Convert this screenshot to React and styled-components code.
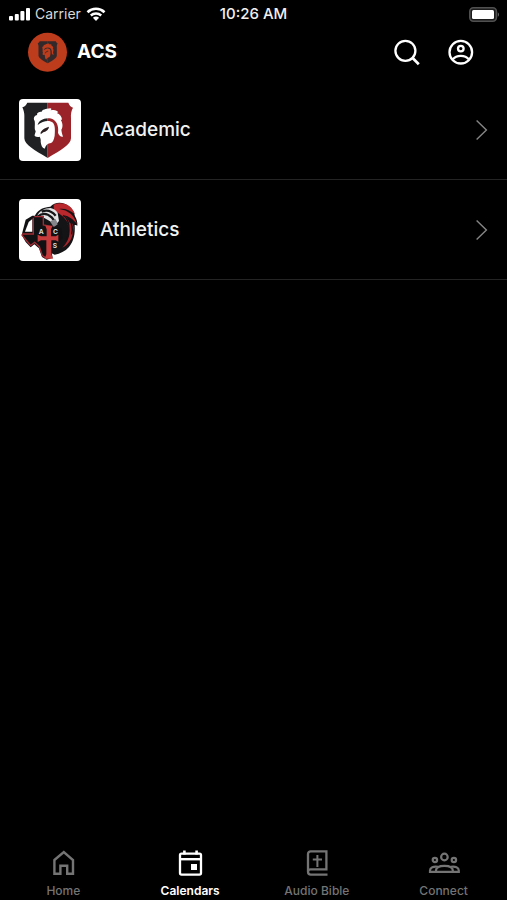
import { useState } from "react";
import styled, { createGlobalStyle } from "styled-components";

const GlobalStyle = createGlobalStyle`
  *,
  *::before,
  *::after {
    box-sizing: border-box;
  }

  body {
    margin: 0;
    background: #000;
    color: #fff;
    font-family: Inter, "Liberation Sans", sans-serif;
  }
`;

const Screen = styled.div`
  display: flex;
  flex-direction: column;
  min-height: 100vh;
`;

const StatusBar = styled.div`
  display: grid;
  grid-template-columns: 1fr auto 1fr;
  align-items: center;
  height: 28px;
  padding: 0 7px;
  font-size: 14px;
  line-height: 20px;
`;

const StatusGroup = styled.div`
  display: flex;
  align-items: center;
  gap: 5px;
  justify-content: ${(props) => (props.$end ? "flex-end" : "flex-start")};
  color: #d8d8d8;
`;

const Time = styled.time`
  font-size: 15px;
  font-weight: 500;
  color: #f0f0f0;
`;

const Header = styled.header`
  display: flex;
  align-items: center;
  height: 48px;
  padding: 0 32px 0 28px;
`;

const Title = styled.h1`
  flex: 1;
  margin: 0 0 0 10px;
  font-size: 19px;
  line-height: 24px;
  font-weight: 700;
`;

const Actions = styled.div`
  display: flex;
  gap: 26px;
`;

const IconButton = styled.button`
  display: flex;
  padding: 0;
  border: 0;
  background: none;
  color: #fff;
  cursor: pointer;
`;

const List = styled.ul`
  flex: 1;
  margin: 0;
  padding: 4px 0 0;
  list-style: none;
`;

const Row = styled.li`
  border-bottom: 1px solid #242424;
`;

const RowLink = styled.a`
  display: flex;
  align-items: center;
  gap: 19px;
  height: 99px;
  padding: 0 19px;
  color: #f2f2f2;
  text-decoration: none;
`;

const Thumb = styled.span`
  display: flex;
  overflow: hidden;
  border-radius: 4px;
  background: #fff;
`;

const RowLabel = styled.span`
  flex: 1;
  font-size: 19px;
  line-height: 24px;
  font-weight: 500;
`;

const TabBar = styled.nav`
  display: grid;
  grid-template-columns: repeat(4, 1fr);
`;

const Tab = styled.a`
  display: flex;
  flex-direction: column;
  align-items: center;
  gap: 6px;
  padding-bottom: 1px;
  font-size: 12px;
  line-height: 16px;
  font-weight: ${(props) => (props.$active ? 600 : 500)};
  color: ${(props) => (props.$active ? "#fff" : "#747474")};
  text-decoration: none;
`;

// --- status icons ------------------------------------------------
function SignalIcon() {
  return (
    <svg width="23" height="14" viewBox="-2 0 23 14" fill="#fff" aria-hidden="true">
      <rect x="0" y="9" width="4" height="4.5" rx="1" />
      <rect x="5.8" y="7" width="4" height="6.5" rx="1" />
      <rect x="11.4" y="4" width="4" height="9.5" rx="1" />
      <rect x="17" y="1" width="4" height="12.5" rx="1" />
    </svg>
  );
}

function WifiIcon() {
  return (
    <svg width="20" height="14" viewBox="0 0 20 14" fill="none" aria-hidden="true">
      <path d="M1.5 5.2a12.3 12.3 0 0 1 17 0" stroke="#fff" strokeWidth="2.6" />
      <path d="M4.8 8.5a7.6 7.6 0 0 1 10.4 0" stroke="#fff" strokeWidth="2.4" />
      <path d="M10 14 6.9 10.8a4.6 4.6 0 0 1 6.2 0z" fill="#fff" />
    </svg>
  );
}

function BatteryIcon() {
  return (
    <svg width="31" height="15" viewBox="0 0 31 15" aria-hidden="true">
      <rect x="0.8" y="0.8" width="26.6" height="13.4" rx="3.6" fill="#1c1c1c" stroke="#505050" strokeWidth="1.6" />
      <rect x="3" y="3" width="22" height="9" rx="1.5" fill="#fff" />
      <path d="M28.8 5.2c1.6.8 1.6 3.8 0 4.6z" fill="#666" />
    </svg>
  );
}

// --- header icons ------------------------------------------------
function SearchIcon() {
  return (
    <svg width="28" height="28" viewBox="0 0 28 28" fill="none" stroke="#fff" strokeWidth="2.3" aria-hidden="true">
      <circle cx="12.4" cy="12.8" r="10" />
      <path d="m19.6 20 6.2 6.2" strokeWidth="2.7" />
    </svg>
  );
}

function ProfileIcon() {
  return (
    <svg width="28" height="28" viewBox="0 0 28 28" fill="none" stroke="#fff" strokeWidth="2.3" aria-hidden="true">
      <circle cx="13.8" cy="14.2" r="11.3" />
      <circle cx="13.8" cy="10.6" r="2.8" />
      <path d="M5.8 21.4c3.6-4.6 12.4-4.6 16 0" />
    </svg>
  );
}

function ChevronIcon() {
  return (
    <svg width="12" height="20" viewBox="0 0 12 20" fill="none" stroke="#858585" strokeWidth="1.4" aria-hidden="true">
      <path d="m.6.6 9.8 9.4L.6 19.4" />
    </svg>
  );
}

// --- emblems -----------------------------------------------------
const SHIELD_LEFT =
  "M86 11H25C22 18 17 23 10 25c4 9 7 17 6 33v60c1 20 30 35 70 59z";
const SHIELD_RIGHT =
  "M86 11h62c3 8 7 12 14 15-5 9-7 18-6 32v60c-1 20-30 35-70 59z";
const HELMET =
  "M47 66C42 58 45 50 55 48C51 43 60 38 68 38C70 32 79 30 94 28C98 28 98 31 95 34C106 31 115 34 118 40L113 42C123 45 129 54 129 62L125 62C133 74 131 86 127 92C128 102 131 108 132 113C124 114 119 107 117 101C119 86 116 71 104 62C92 55 76 57 66 64C60 68 57 73 56 78C72 65 92 63 102 71C109 80 108 95 107 110C105 122 101 130 96 132C86 133 81 138 77 149C69 146 66 138 65 128C66 122 64 116 62 113C56 115 51 113 47 111C46 106 50 101 50 96C45 91 49 78 47 66Z";

function AppLogo() {
  return (
    <svg width="39" height="40" viewBox="0 0 39 40" aria-hidden="true">
      <circle cx="19.5" cy="20.3" r="19.5" fill="#bd3c1c" />
      <g transform="translate(8.4 7.8) scale(.131 .133)">
        <path d={SHIELD_LEFT} fill="#34292a" />
        <path d={SHIELD_RIGHT} fill="#34292a" />
        <path d={HELMET} fill="#bd3c1c" />
        <path d="M66 102c5-10 14-15 24-18" fill="none" stroke="#5b2c22" strokeWidth="8" />
      </g>
    </svg>
  );
}

function AcademicEmblem() {
  return (
    <svg width="62" height="62" viewBox="0 0 186 186" aria-hidden="true">
      <path d={SHIELD_LEFT} fill="#202123" />
      <path d={SHIELD_RIGHT} fill="#992328" />
      <path d={HELMET} fill="#fff" />
      <path d="M65 100c6-10 13-13 25-17-1 9-7 14-17 17l-8 6z" fill="#2a1c1f" />
    </svg>
  );
}

function AthleticsEmblem() {
  return (
    <svg width="62" height="62" viewBox="0 0 186 186" aria-hidden="true">
      {/* mane and plume */}
      <path
        d="M50 46c8-15 26-22 44-23 10-12 28-15 43-9 17 7 28 21 31 38 5 9 8 18 7 28-4-2-6-2-8-2 2 27-3 49-17 66-12 13-26 20-43 23L53 141 35 80z"
        fill="#141316"
      />
      <path d="M104 17c26-10 54-1 64 29-15-12-29-18-47-16 26 4 44 17 53 46-12-16-24-24-39-27 13 11 20 24 20 37-14-26-27-42-51-50z" fill="#b8282d" />
      <path d="M146 76c12 27 3 51-16 70 19-8 31-27 33-52 3-10 0-17-7-24z" fill="#a62329" />
      <path d="M132 49c19 10 24 43 9 75M150 60c10 14 12 30 8 46" fill="none" stroke="#141216" strokeWidth="4" />
      {/* helmet */}
      <path d="M52 54c9-18 24-27 43-27 9 2 17 7 21 15l4 24-13 14-15-14-20-11-20 4z" fill="#e3e3e5" />
      <path d="M56 53c14-12 29-10 42 2l12 16M68 38c16-7 31-1 42 12" fill="none" stroke="#17171a" strokeWidth="7" />
      <path d="M93 67l17-7 6 16-12 9z" fill="#85868b" />
      {/* state outline */}
      <path
        d="M40 50h34v26l19 5 34 6 4 31-18 17-16 20 4 21-18 6-14-8-9-26-14-12-11 9-15-16L8 108l12-46z"
        fill="#111114"
      />
      <path
        d="M8 107l13 16 14 16 12-9 14 13 9 27 13 8"
        fill="none"
        stroke="#a32b33"
        strokeWidth="4"
      />
      <path d="M18 98 29 69l11-9v38z" fill="#fff" />
      <path d="M43 56v49H9M46 53h27v25l22 4" fill="none" stroke="#a32b33" strokeWidth="4" />
      {/* cross */}
      <path d="M79 80h22l-5 11v21h14l8-5v21l-8-4H97v42l5 13H77l5-13v-42H66l-10 5v-22l10 5h17V91z" fill="#c83b3c" />
      <g fill="#ddd" fontFamily="Inter, sans-serif" fontSize="20" fontWeight="700">
        <text x="59" y="106">A</text>
        <text x="102" y="106">C</text>
        <text x="101" y="148">S</text>
      </g>
    </svg>
  );
}

// --- tab icons ---------------------------------------------------
function HomeIcon() {
  return (
    <svg width="28" height="28" viewBox="0 0 28 28" fill="none" stroke="currentColor" strokeWidth="2.4" aria-hidden="true">
      <path d="M5.4 11 14.8 3l9.2 8v13.8h-5.8v-8h-6.8v8h-6z" />
    </svg>
  );
}

function CalendarIcon() {
  return (
    <svg width="28" height="28" viewBox="0 0 28 28" fill="none" stroke="currentColor" aria-hidden="true">
      <rect x="4" y="4.6" width="21" height="21" rx="1.5" strokeWidth="2.3" />
      <path d="M4 10.2h21" strokeWidth="2.4" />
      <path d="M8.4 1.6v4M20.6 1.6v4" strokeWidth="2.6" />
      <path d="M15 15h6v6h-6z" fill="currentColor" stroke="none" />
    </svg>
  );
}

function BibleIcon() {
  return (
    <svg width="28" height="28" viewBox="0 0 28 28" fill="none" stroke="currentColor" strokeWidth="2.3" aria-hidden="true">
      <path d="M24.5 25.6H7.8A2.8 2.8 0 0 1 5 22.8V5A2.6 2.6 0 0 1 7.6 2.4H23.4V20.4H7.8A2.7 2.7 0 0 0 5 22.8" />
      <path d="M14.4 6v12M9.8 10.4H19" strokeWidth="2" />
    </svg>
  );
}

function ConnectIcon() {
  return (
    <svg width="32" height="28" viewBox="0 0 32 28" fill="none" stroke="currentColor" strokeWidth="2.2" aria-hidden="true">
      <circle cx="16.4" cy="8" r="3.3" />
      <circle cx="6.9" cy="11" r="2.2" />
      <circle cx="25.9" cy="11" r="2.2" />
      <path d="M8 22.8v-1.4C8 18 11.7 16.8 16.4 16.8s8.4 1.2 8.4 4.6v1.4M9.9 17.8C5.4 17 2 18.5 2 21.5v1.3h28.8v-1.3c0-3-3.4-4.5-7.9-3.7" />
    </svg>
  );
}

const calendars = [
  { name: "Academic", Emblem: AcademicEmblem },
  { name: "Athletics", Emblem: AthleticsEmblem },
];

const tabs = [
  { name: "Home", Icon: HomeIcon },
  { name: "Calendars", Icon: CalendarIcon },
  { name: "Audio Bible", Icon: BibleIcon },
  { name: "Connect", Icon: ConnectIcon },
];

function App() {
  const [activeTab, setActiveTab] = useState("Calendars");

  return (
    <>
      <GlobalStyle />
      <Screen>
        <StatusBar>
          <StatusGroup>
            <SignalIcon />
            <span>Carrier</span>
            <WifiIcon />
          </StatusGroup>
          <Time>10:26 AM</Time>
          <StatusGroup $end>
            <BatteryIcon />
          </StatusGroup>
        </StatusBar>

        <Header>
          <AppLogo />
          <Title>ACS</Title>
          <Actions>
            <IconButton type="button" aria-label="Search">
              <SearchIcon />
            </IconButton>
            <IconButton type="button" aria-label="Profile">
              <ProfileIcon />
            </IconButton>
          </Actions>
        </Header>

        <List>
          {calendars.map(({ name, Emblem }) => (
            <Row key={name}>
              <RowLink href={`#${name.toLowerCase()}`}>
                <Thumb>
                  <Emblem />
                </Thumb>
                <RowLabel>{name}</RowLabel>
                <ChevronIcon />
              </RowLink>
            </Row>
          ))}
        </List>

        <TabBar>
          {tabs.map(({ name, Icon }) => (
            <Tab
              key={name}
              href="#"
              $active={name === activeTab}
              aria-current={name === activeTab ? "page" : undefined}
              onClick={(e) => {
                e.preventDefault();
                setActiveTab(name);
              }}
            >
              <Icon />
              {name}
            </Tab>
          ))}
        </TabBar>
      </Screen>
    </>
  );
}

export default App;
